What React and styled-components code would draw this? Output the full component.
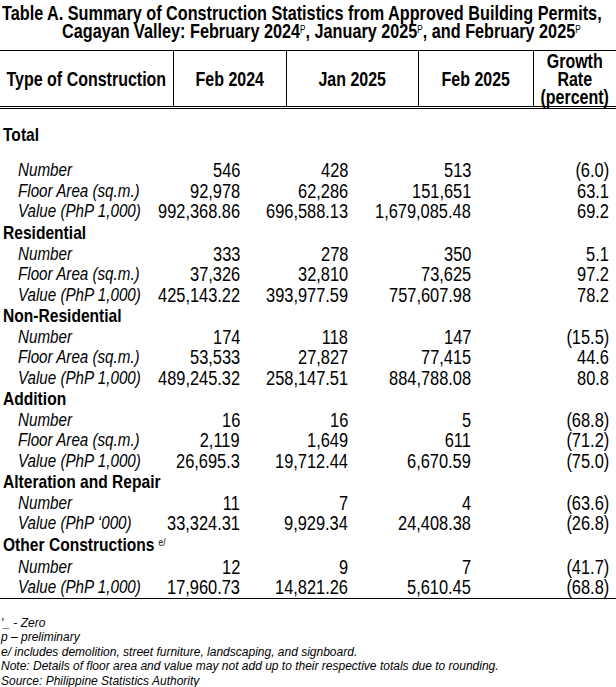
import React from "react";
import styled, { createGlobalStyle } from "styled-components";

const GlobalStyle = createGlobalStyle`
  html, body { margin: 0; padding: 0; background: #fff; }
  body { font-family: "Liberation Sans", Arial, sans-serif; color: #000; }
`;

// the reference is set in a narrow face; squeeze Liberation Sans to match
const Narrow = styled.span`
  display: inline-block;
  white-space: nowrap;
  transform: scaleX(0.82);
  transform-origin: ${(p) => p.origin || "left"} center;
`;

const Page = styled.div`
  width: 616px;
  height: 687px;
  overflow: hidden;
`;

const Title = styled.h1`
  margin: 0;
  padding: 5px 0 0 2px;
  font-size: 19.8px;
  line-height: 17.5px;
  font-weight: bold;
  white-space: nowrap;
`;

const TitleLine = styled.div`
  padding-left: ${(p) => p.indent}px;
  height: 17.5px;
`;

const Sup = styled.sup`
  font-size: 10px;
  font-weight: normal;
  vertical-align: 5px;
  line-height: 0;
  margin-left: ${(p) => p.gap || 0}px;
`;

const Table = styled.table`
  margin-top: 10px;
  width: 616px;
  border-collapse: collapse;
  table-layout: fixed;
`;

const HeadCell = styled.th`
  font-size: 19.5px;
  font-weight: bold;
  line-height: 18px;
  height: 55px;
  padding: 0;
  border-top: 1px solid #000;
  border-bottom: 3px double #000;
  border-left: ${(p) => (p.first ? "none" : "1px solid #000")};
`;

const Center = styled.div`
  display: flex;
  justify-content: center;
  text-align: center;
`;

const GroupCell = styled.td`
  font-size: 19px;
  font-weight: bold;
  line-height: 20px;
  padding: ${(p) => p.pt}px 0 0 3px;
  height: ${(p) => p.h}px;
  box-sizing: border-box;
  vertical-align: ${(p) => (p.pt ? "top" : "middle")};
`;

const Gap = styled.td`
  height: ${(p) => p.h}px;
  padding: 0;
`;

const LabelCell = styled.td`
  font-size: 18.5px;
  font-style: italic;
  padding: 0 0 0 18px;
  height: 20.5px;
  line-height: 20px;
  white-space: nowrap;
`;

const NumCell = styled.td`
  font-size: 20px;
  padding: 0 ${(p) => p.pr}px 0 0;
  height: 20.5px;
  line-height: 20px;
`;

const Right = styled.div`
  display: flex;
  justify-content: flex-end;
  align-items: center;
`;

const Caret = styled.span`
  width: 1px;
  height: 18px;
  background: #000;
  margin-right: 1px;
`;

const BottomRow = styled.tr`
  td { border-bottom: 1px solid #000; }
`;

const Notes = styled.div`
  padding: 17px 0 0 1px;
  font-size: 12px;
  font-style: italic;
  line-height: 14.5px;
`;

const NoteLine = styled.div`
  white-space: nowrap;
`;

const pads = [46, 70, 62, 7];

const groups = [
  {
    name: "Total",
    rows: [
      ["Number", "546", "428", "513", "(6.0)"],
      ["Floor Area (sq.m.)", "92,978", "62,286", "151,651", "63.1"],
      ["Value (PhP 1,000)", "992,368.86", "696,588.13", "1,679,085.48", "69.2"],
    ],
  },
  {
    name: "Residential",
    h: 22,
    rows: [
      ["Number", "333", "278", "350", "5.1"],
      ["Floor Area (sq.m.)", "37,326", "32,810", "73,625", "97.2"],
      ["Value (PhP 1,000)", "425,143.22", "393,977.59", "757,607.98", "78.2"],
    ],
  },
  {
    name: "Non-Residential",
    h: 21.5,
    rows: [
      ["Number", "174", "118", "147", "(15.5)"],
      ["Floor Area (sq.m.)", "53,533", "27,827", "77,415", "44.6"],
      ["Value (PhP 1,000)", "489,245.32", "258,147.51", "884,788.08", "80.8"],
    ],
  },
  {
    name: "Addition",
    h: 21.5,
    rows: [
      ["Number", "16", "16", "5", "(68.8)"],
      ["Floor Area (sq.m.)", "2,119", "1,649", "611", "(71.2)"],
      ["Value (PhP 1,000)", "26,695.3", "19,712.44", "6,670.59", "(75.0)"],
    ],
  },
  {
    name: "Alteration and Repair",
    h: 21.5,
    rows: [
      ["Number", "11", "7", "4", "(63.6)"],
      ["Value (PhP \u2018000)", "33,324.31", "9,929.34", "24,408.38", "(26.8)"],
    ],
  },
  {
    name: "Other Constructions",
    note: "e/",
    h: 23,
    rows: [
      ["Number", "12", "9", "7", "(41.7)"],
      ["Value (PhP 1,000)", "17,960.73", "14,821.26", "5,610.45", "(68.8)", true],
    ],
  },
];

const notes = [
  "'_  - Zero",
  "p \u2013 preliminary",
  "e/ includes demolition, street furniture, landscaping, and signboard.",
  "Note: Details of floor area and value may not add up to their respective totals due to rounding.",
  "Source: Philippine Statistics Authority",
];

function Head({ first, children }) {
  return (
    <HeadCell first={first}>
      <Center>
        <Narrow origin="center">{children}</Narrow>
      </Center>
    </HeadCell>
  );
}

export default function App() {
  return (
    <Page>
      <GlobalStyle />
      <Title>
        <TitleLine indent={0}>
          <Narrow>Table A. Summary of Construction Statistics from Approved Building Permits,</Narrow>
        </TitleLine>
        <TitleLine indent={60}>
          <Narrow>
            Cagayan Valley: February 2024<Sup>P</Sup>, January 2025<Sup>P</Sup>, and February 2025<Sup>P</Sup>
          </Narrow>
        </TitleLine>
      </Title>
      <Table>
        <colgroup>
          <col style={{ width: 173 }} />
          <col style={{ width: 113 }} />
          <col style={{ width: 132 }} />
          <col style={{ width: 115 }} />
          <col style={{ width: 83 }} />
        </colgroup>
        <thead>
          <tr>
            <Head first>Type of Construction</Head>
            <Head>Feb 2024</Head>
            <Head>Jan 2025</Head>
            <Head>Feb 2025</Head>
            <Head>
              Growth
              <br />
              Rate
              <br />
              (percent)
            </Head>
          </tr>
        </thead>
        <tbody>
          {groups.map((g, gi) => {
            const first = gi === 0;
            return (
              <React.Fragment key={g.name}>
                <tr>
                  <GroupCell colSpan={5} pt={first ? 16 : 0} h={first ? 37 : g.h}>
                    <Narrow>
                      {g.name}
                      {g.note && <Sup gap={5}>{g.note}</Sup>}
                    </Narrow>
                  </GroupCell>
                </tr>
                {first && (
                  <tr>
                    <Gap colSpan={5} h={15} />
                  </tr>
                )}
                {g.rows.map((r, ri) => {
                  const last = gi === groups.length - 1 && ri === g.rows.length - 1;
                  const Row = last ? BottomRow : "tr";
                  return (
                    <Row key={ri}>
                      <LabelCell>
                        <Narrow>{r[0]}</Narrow>
                      </LabelCell>
                      {r.slice(1, 5).map((v, vi) => (
                        <NumCell key={vi} pr={pads[vi]}>
                          <Right>
                            {vi === 0 && r[5] && <Caret />}
                            <Narrow origin="right">{v}</Narrow>
                          </Right>
                        </NumCell>
                      ))}
                    </Row>
                  );
                })}
              </React.Fragment>
            );
          })}
        </tbody>
      </Table>
      <Notes>
        {notes.map((n) => (
          <NoteLine key={n}>{n}</NoteLine>
        ))}
      </Notes>
    </Page>
  );
}
